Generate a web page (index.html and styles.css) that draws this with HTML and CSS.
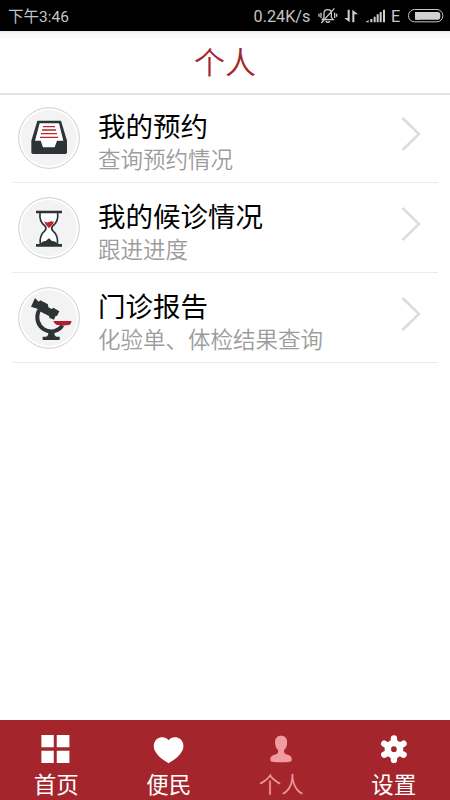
FILE: index.html
```html
<!DOCTYPE html>
<html lang="zh-CN">
<head>
<meta charset="utf-8">
<title>个人</title>
<link rel="stylesheet" href="styles.css">
</head>
<body>
<div class="screen">
  <div class="status">
    <span class="time">下午3:46</span>
    <span class="speed">0.24K/s</span>
    <svg class="status-icons" viewBox="234 0 380 93">
      <g fill="none" stroke="#c8c8c8" stroke-width="4">
        <path d="M247 59H280L274 52V39Q274 29 263 29Q252 29 252 40V52ZM257 64Q264 70 270 64M244 69L283 25M243 38V54M237 41V50M284 38V54M290 41V50"/>
      </g>
      <g fill="#d0d0d0">
        <path d="M323 29H329V67L313 54H323ZM337 29L354 43H343V67H337Z"/>
        <path d="M376 67L386 60V67ZM391 57H397V67H391ZM401 50H407V67H401ZM410 43H416V67H410ZM419 36H425V67H419ZM429 29H435V67H429Z"/>
        <rect x="525" y="36" width="76" height="23" rx="8"/>
        <path d="M525 36H540V59H525Z"/>
      </g>
      <rect x="505.500" y="28.500" width="103" height="37" rx="18" fill="none" stroke="#c8c8c8" stroke-width="3"/>
      <text class="network" x="453" y="67">E</text>
    </svg>
  </div>
  <header class="header"><h1>个人</h1></header>
  <main class="list">
    <a class="row">
      <svg class="badge" viewBox="54 36 186 186">
        <circle class="disc" cx="147" cy="129" r="91"/>
        <circle class="disc-inner" cx="147" cy="129" r="84"/>
        <path fill="#2d3436" d="M112 77H183L201 137V172Q201 177 196 177H99Q94 177 94 172V137Z"/>
        <path fill="#fff" d="M119 85H177L190 137H171L164 157H129L122 137H105Z"/>
        <path stroke="#b9252c" stroke-width="4" d="M129 95H165M126 105H168M123 116H171M120 127H174"/>
      </svg>
      <div class="copy"><h2>我的预约</h2><p>查询预约情况</p></div>
      <svg class="chevron" viewBox="0 0 20 34"><path d="M1.500 1L18 17L1.500 33"/></svg>
    </a>
    <a class="row">
      <svg class="badge" viewBox="54 36 186 186">
        <circle class="disc" cx="147" cy="129" r="91"/>
        <circle class="disc-inner" cx="147" cy="129" r="84"/>
        <path fill="#fff" d="M120 84H173Q176 110 152 130Q176 150 172 178H121Q118 150 141 130Q117 110 120 84Z"/>
        <path fill="none" stroke="#2d3436" stroke-width="5" d="M120 84Q117 110 135 123Q141 130 135 137Q117 152 121 178M173 84Q176 110 158 123Q152 130 158 137Q176 152 172 178"/>
        <path fill="#2d3436" d="M108 77H186V85H108ZM108 177H186V185H108ZM122 178Q124 169 137 168L147 160L156 168Q170 169 172 178Z"/>
        <path fill="#b9252c" d="M132 109Q140 114 147 111Q154 107 162 111Q158 120 147 130Q136 120 132 109Z"/>
      </svg>
      <div class="copy"><h2>我的候诊情况</h2><p>跟进进度</p></div>
      <svg class="chevron" viewBox="0 0 20 34"><path d="M1.500 1L18 17L1.500 33"/></svg>
    </a>
    <a class="row">
      <svg class="badge" viewBox="54 36 186 186">
        <circle class="disc" cx="147" cy="129" r="91"/>
        <circle class="disc-inner" cx="147" cy="129" r="84"/>
        <path fill="#2d3436" d="M105 69L116 80L121 76L144 88L145 97L155 102L160 98L178 109L171 123L167 122L162 134L149 129L147 123L119 109L112 101L93 95ZM128 185H138Q145 183 145 173H163Q163 183 170 185H179V195H128Z"/>
        <path fill="none" stroke="#2d3436" stroke-width="12" d="M117 105C106 130 114 152 132 163C151 175 177 169 187 151"/>
        <path fill="#b01f27" d="M160 138H215Q214 147 207 150Q187 153 169 149Q162 145 160 138Z"/>
      </svg>
      <div class="copy"><h2>门诊报告</h2><p>化验单、体检结果查询</p></div>
      <svg class="chevron" viewBox="0 0 20 34"><path d="M1.500 1L18 17L1.500 33"/></svg>
    </a>
  </main>
  <nav class="tabs">
    <a class="tab">
      <svg viewBox="120.750 69 96 96"><path d="M125 75H162V112H125ZM171 75H209V112H171ZM125 122H162V159H125ZM171 122H209V159H171Z"/></svg>
      <span>首页</span>
    </a>
    <a class="tab">
      <svg viewBox="458.250 69 96 96"><path d="M505 91C512 80 530 79 540 87C551 96 552 112 545 124C538 139 520 151 505 160C490 151 472 139 465 124C458 112 459 96 470 87C480 79 498 80 505 91Z"/></svg>
      <span>便民</span>
    </a>
    <a class="tab active">
      <svg viewBox="120.750 69 96 96"><path d="M169 77C181 77 188 85 187 98Q187 112 178 120C177 131 182 132 189 134C200 137 202 143 201 152Q198 157 169 157Q140 157 137 152C136 143 138 137 149 134C157 132 161 131 160 120Q151 112 151 98C150 85 157 77 169 77Z"/></svg>
      <span>个人</span>
    </a>
    <a class="tab">
      <svg viewBox="458.250 69 96 96">
        <path class="spokes" d="M506 85V150M477 101L535 134M477 134L535 101"/>
        <circle cx="506" cy="117.500" r="28"/>
        <circle class="hub" cx="506" cy="117.500" r="8.500"/>
      </svg>
      <span>设置</span>
    </a>
  </nav>
</div>
</body>
</html>
```

FILE: styles.css
```css
* {
  box-sizing: border-box;
}

body,
h1,
h2,
p {
  margin: 0;
  font-weight: 400;
}

body {
  font-family: Roboto, "Noto Sans CJK SC", sans-serif;
  background: #fff;
}

.screen {
  width: 450px;
  height: 800px;
  display: flex;
  flex-direction: column;
  overflow: hidden;
}

.status {
  flex: none;
  height: 31px;
  padding: 3px 5px 0 8px;
  display: flex;
  align-items: center;
  background: #000;
  color: #c4c4c4;
  font-size: 16px;
  line-height: 28px;
}

.time {
  font-size: 15.500px;
}

.speed {
  margin-left: auto;
  margin-right: 8px;
  font-size: 16.200px;
}

.status-icons {
  width: 126.670px;
  height: 31px;
  margin-top: -3px;
}

.network {
  fill: #c8c8c8;
  font-size: 49px;
}

.header {
  flex: none;
  height: 64px;
  padding-top: 2px;
  border-bottom: 2px solid #e2e2e2;
  background: linear-gradient(#e6e6e6 0, #f7f7f7 2px, #fff 9px);
  text-align: center;
}

.header h1 {
  color: #a4252c;
  font-size: 31px;
  font-weight: 350;
  line-height: 62px;
}

.list {
  flex: 1;
  margin-top: -2px;
  padding: 0 12px;
}

.row {
  height: 90px;
  padding: 14px 17px 0 6px;
  display: flex;
  align-items: flex-start;
  border-bottom: 1px solid #ebebeb;
}

.badge {
  width: 62px;
  height: 62px;
  flex: none;
}

.disc {
  fill: #fff;
  stroke: #cecece;
  stroke-width: 3;
}

.disc-inner {
  fill: #f3f3f3;
}

.copy {
  flex: 1;
  margin: 2px 0 0 18px;
  white-space: nowrap;
}

.copy h2 {
  color: #000;
  font-size: 27.500px;
  line-height: 37px;
}

.copy p {
  color: #9c9c9c;
  font-size: 22.500px;
  font-weight: 350;
  line-height: 28px;
}

.chevron {
  width: 20px;
  height: 34px;
  margin-top: 10px;
  fill: none;
  stroke: #dcdcdc;
  stroke-width: 2.500;
}

.tabs {
  flex: none;
  height: 80px;
  display: grid;
  grid-template-columns: repeat(4, 1fr);
  background: #a4262c;
  color: #fff;
}

.tab {
  padding-top: 13px;
  display: flex;
  flex-direction: column;
  align-items: center;
  font-size: 22.500px;
  line-height: 41px;
}

.tab svg {
  flex: none;
  width: 32px;
  height: 32px;
  fill: #fff;
}

.tab.active {
  color: #f19a9f;
  font-weight: 350;
}

.tab.active svg {
  fill: #f19a9f;
}

.tab .spokes {
  stroke: #fff;
  stroke-width: 19;
  stroke-linecap: round;
}

.tab .hub {
  fill: #a4262c;
}
```
